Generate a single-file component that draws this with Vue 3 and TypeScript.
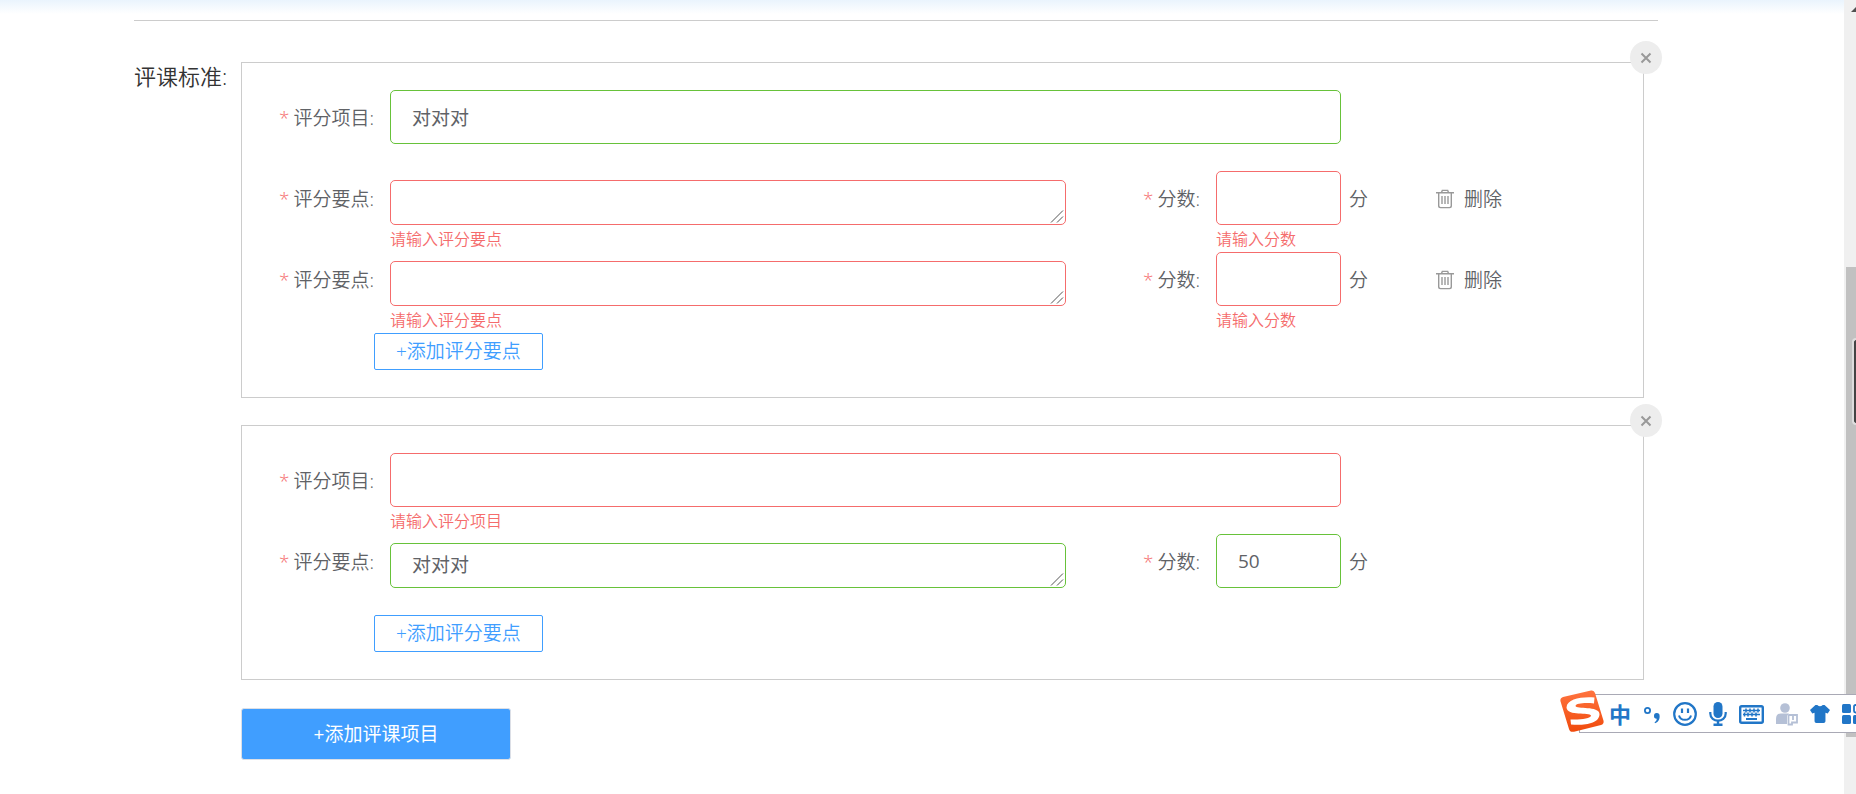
<script setup lang="ts">
import { reactive } from 'vue'

interface Point {
  text: string
  score: string
}

interface Project {
  name: string
  points: Point[]
}

const projects = reactive<Project[]>([
  { name: '对对对', points: [{ text: '', score: '' }, { text: '', score: '' }] },
  { name: '', points: [{ text: '对对对', score: '50' }] },
])

const addPoint = (project: Project) => project.points.push({ text: '', score: '' })
const removePoint = (project: Project, index: number) => project.points.splice(index, 1)
const addProject = () => projects.push({ name: '', points: [{ text: '', score: '' }] })
const removeProject = (index: number) => projects.splice(index, 1)
const state = (value: string) => (value ? 'valid' : 'invalid')
</script>

<template>
  <div class="page">
    <div class="top-shade"></div>
    <main class="content">
      <hr class="divider" />
      <section class="standard">
        <h2 class="title">评课标准:</h2>
        <div class="cards">
          <form v-for="(project, p) in projects" :key="p" class="card" @submit.prevent>
            <button type="button" class="close" aria-label="关闭" @click="removeProject(p)">
              <svg width="12" height="12" viewBox="0 0 12 12" aria-hidden="true">
                <path d="M1.5 1.5 10.5 10.5M10.5 1.5 1.5 10.5" fill="none" stroke="#999" stroke-width="2" />
              </svg>
            </button>

            <div class="row">
              <label class="label" :for="`name-${p}`"><span class="star">*</span>评分项目:</label>
              <div class="field wide">
                <input :id="`name-${p}`" v-model="project.name" type="text" class="control" :class="state(project.name)" />
                <p v-if="!project.name" class="error">请输入评分项目</p>
              </div>
            </div>

            <div v-for="(point, i) in project.points" :key="i" class="row">
              <label class="label" :for="`point-${p}-${i}`"><span class="star">*</span>评分要点:</label>
              <div class="field">
                <textarea :id="`point-${p}-${i}`" v-model="point.text" rows="1" class="control area" :class="state(point.text)"></textarea>
                <p v-if="!point.text" class="error">请输入评分要点</p>
              </div>
              <label class="label" :for="`score-${p}-${i}`"><span class="star">*</span>分数:</label>
              <div class="field">
                <input :id="`score-${p}-${i}`" v-model="point.score" type="text" class="control" :class="state(point.score)" />
                <p v-if="!point.score" class="error">请输入分数</p>
              </div>
              <div class="tail">
                <span class="unit">分</span>
                <button v-if="project.points.length > 1" type="button" class="remove" @click="removePoint(project, i)">
                  <svg width="18" height="20" viewBox="0 0 18 20" aria-hidden="true">
                    <g fill="none" stroke="#999" stroke-width="1.4">
                      <path d="M0 3.7H18M5.5 3.4 6.3 1.4H11.7L12.5 3.4M2.7 4V16.8Q2.7 18.6 4.5 18.6H13.5Q15.3 18.6 15.3 16.8V4" />
                      <path d="M6 7V15M9 7V15M12 7V15" />
                    </g>
                  </svg>
                  删除
                </button>
              </div>
            </div>

            <button type="button" class="add-point" @click="addPoint(project)">+添加评分要点</button>
          </form>
          <button type="button" class="add-project" @click="addProject">+添加评课项目</button>
        </div>
      </section>
    </main>

    <div class="scrollbar" aria-hidden="true">
      <svg class="arrow" width="5" height="5" viewBox="0 0 5 5"><path d="M0 5 5 0V5Z" fill="#505050" /></svg>
      <div class="thumb"></div>
      <div class="dock"></div>
    </div>

    <div class="ime">
      <svg class="logo" width="44" height="43" viewBox="0 0 44 43" aria-hidden="true">
        <defs>
          <linearGradient id="flame" x1="0" y1="0" x2="0" y2="1">
            <stop offset="0" stop-color="#ff7440" />
            <stop offset="1" stop-color="#f04a0c" />
          </linearGradient>
        </defs>
        <path d="M3 7 31 .6Q34 0 35 3L43.6 31Q44 34 41 35L14 41.7Q10 42.5 9 39L.4 11Q0 8 3 7Z" fill="url(#flame)" />
        <path d="M34.5 7.5 34 13.500C26 12.500 16 13 15.500 16C16 19.500 39 15.500 39.500 24C39.500 34 24 35.500 11 34.500L10.500 29.500C20 30 31 28.500 31 25.500C30 22 7 26.500 6.500 17.500C7 8.500 22 6.500 34.500 7.500Z" fill="#fff" />
      </svg>
      <span class="mode">中</span>
      <svg width="18" height="24" viewBox="0 0 18 24" aria-hidden="true">
        <circle cx="4.500" cy="8.500" r="2.600" fill="none" stroke="#2176c7" stroke-width="1.800" />
        <path d="M11 14a2.800 2.800 0 0 1 5.600-.2C17 17.500 15 20.500 12 21.300L11.600 20.200C13 19.500 13.800 18.300 13.700 16.800A2.700 2.700 0 0 1 11 14Z" fill="#2176c7" />
      </svg>
      <svg width="24" height="24" viewBox="0 0 24 24" fill="none" stroke="#2176c7" aria-hidden="true">
        <circle cx="12" cy="12" r="10.800" stroke-width="2.200" />
        <path d="M9 6.500V11M15 6.500V11" stroke-width="2.200" />
        <path d="M6 13.500C7.500 19.300 16.500 19.300 18 13.500" stroke-width="2" />
      </svg>
      <svg width="18" height="24" viewBox="0 0 18 24" aria-hidden="true">
        <rect x="4.500" y="0" width="9" height="16" rx="4.500" fill="#2176c7" />
        <path d="M1.300 10V11.500C1.300 21 16.700 21 16.700 11.500V10" fill="none" stroke="#2176c7" stroke-width="2.200" />
        <path d="M9 18V23M4.500 22.800H13.500" stroke="#2176c7" stroke-width="2.400" />
      </svg>
      <svg width="25" height="24" viewBox="0 0 25 24" aria-hidden="true">
        <rect x="1.200" y="4.200" width="22.600" height="16.600" rx="1.500" fill="none" stroke="#2176c7" stroke-width="2.400" />
        <path d="M4 8.500H21M4 12.500H21M7 6.500V10.500M11 6.500V10.500M15 6.500V10.500M19 6.500V10.500M5.500 10.500V14.500M9 10.500V14.500M13 10.500V14.500M17 10.500V14.500" stroke="#2176c7" stroke-width="1.500" />
        <path d="M7 17H18" stroke="#2176c7" stroke-width="2" />
      </svg>
      <svg width="22" height="24" viewBox="0 0 22 24" aria-hidden="true">
        <circle cx="9" cy="6" r="4.800" fill="#b5c0d6" />
        <path d="M0 22V17Q0 11.500 5 11.500H13L11 14V22Z" fill="#b5c0d6" />
        <path d="M13 13H21V20.500H16V22.500H12.500V14ZM17 13V18" fill="none" stroke="#b5c0d6" stroke-width="1.800" />
      </svg>
      <svg width="20" height="24" viewBox="0 0 22 24" aria-hidden="true">
        <path d="M6 2H8Q11 5 14 2H16L22 7.500 19.500 11.500 17 10.500V20Q17 22 15 22H7Q5 22 5 20V10.500L2.500 11.500 0 7.500Z" fill="#2176c7" />
      </svg>
      <svg width="22" height="24" viewBox="0 0 22 24" aria-hidden="true">
        <g fill="#2176c7">
          <rect x="0" y="2" width="9" height="9" rx="1.500" />
          <rect x="0" y="13" width="9" height="9" rx="1.500" />
          <rect x="11" y="13" width="9" height="9" rx="1.500" />
        </g>
        <rect x="12" y="3" width="7.500" height="7.500" rx="1.500" fill="none" stroke="#2176c7" stroke-width="1.800" />
      </svg>
    </div>
  </div>
</template>

<style>
body {
  margin: 0;
  background: #fff;
}
</style>

<style scoped>
.page {
  position: relative;
  min-height: 100vh;
  overflow: hidden;
  color: #606266;
  font: 19px/27px "Open Sans", "Noto Sans CJK SC", sans-serif;
}
.page * {
  box-sizing: border-box;
}
.top-shade {
  position: absolute;
  inset: 0 0 auto;
  height: 14px;
  background: linear-gradient(#eaf4fd, #fff);
}
.content {
  padding: 20px 198px 32px 134px;
}
.divider {
  position: relative;
  height: 1px;
  margin: 0 0 41px;
  border: 0;
  background: #ccc;
}
.standard {
  display: flex;
  align-items: flex-start;
}
.title {
  flex: none;
  width: 107px;
  margin: 0;
  color: #333;
  font-size: 22px;
  font-weight: 350;
  line-height: 28px;
  white-space: nowrap;
}
.cards {
  flex: 1;
  display: flex;
  flex-direction: column;
  align-items: flex-start;
  gap: 27px;
  min-width: 0;
  padding-right: 14px;
}
.card {
  position: relative;
  width: 100%;
  margin: 0;
  padding: 27px 0;
  border: 1px solid #ccc;
  font-weight: 350;
}
button,
input,
textarea {
  font: inherit;
}
button {
  cursor: pointer;
}
.close {
  position: absolute;
  top: -22px;
  right: -19px;
  display: flex;
  align-items: center;
  justify-content: center;
  width: 32px;
  height: 33px;
  padding: 0;
  border: 0;
  border-radius: 50%;
  background: #ededed;
}
.row {
  display: grid;
  grid-template-columns: 148px 1fr 150px 125px 302px;
  height: 81px;
}
.label {
  height: 54px;
  padding-right: 16px;
  line-height: 56px;
  text-align: right;
  white-space: nowrap;
}
.star {
  margin-right: 4px;
  color: #f56c6c;
}
.field {
  display: flex;
  flex-direction: column;
  min-width: 0;
}
.wide {
  grid-column: 2 / 5;
}
.control {
  width: 100%;
  height: 54px;
  padding: 0 21px;
  border: 1px solid #f56c6c;
  border-radius: 5px;
  outline: 0;
  background: #fff;
  color: #606266;
  font-weight: 400;
}
.area {
  height: 45px;
  margin-top: 9px;
  padding: 8px 21px;
  resize: vertical;
  overflow: hidden;
}
.area::-webkit-resizer {
  background: url("data:image/svg+xml,%3Csvg xmlns='http://www.w3.org/2000/svg' width='15' height='15'%3E%3Cpath d='M1 13.500 13 1.500M7 13.500 13 7.500' stroke='%23555' fill='none'/%3E%3C/svg%3E") no-repeat;
}
.valid {
  border-color: #67c23a;
}
.error {
  margin: 0;
  color: #f56c6c;
  font-size: 16px;
  line-height: 28px;
}
.tail {
  display: flex;
  align-items: center;
  height: 54px;
  padding: 2px 0 0 8px;
}
.unit {
  width: 87px;
}
.remove {
  display: flex;
  align-items: center;
  gap: 10px;
  padding: 0;
  border: 0;
  background: none;
  color: #606266;
}
.add-point {
  display: block;
  height: 37px;
  margin-left: 132px;
  padding: 0 21px;
  border: 1px solid #409eff;
  border-radius: 2px;
  background: #fff;
  color: #409eff;
  line-height: 35px;
}
.add-project {
  width: 270px;
  height: 52px;
  margin-top: 1px;
  padding: 0;
  border: 1px solid #dcdfe6;
  border-radius: 3px;
  background: #409eff;
  color: #fff;
}
.scrollbar {
  position: absolute;
  inset: 0 0 0 auto;
  width: 12px;
  background: #f0f0f0;
}
.arrow {
  position: absolute;
  top: 7px;
  right: 0;
}
.thumb {
  position: absolute;
  top: 267px;
  right: 0;
  width: 10px;
  height: 470px;
  background: #c1c1c1;
}
.dock {
  position: absolute;
  top: 338px;
  right: 0;
  width: 4px;
  height: 87px;
  border: 2px solid #ddd;
  border-right: 0;
  border-radius: 4px 0 0 4px;
  background: #444;
}
.ime {
  position: absolute;
  top: 694px;
  right: -9px;
  display: flex;
  align-items: center;
  gap: 12px;
  height: 39px;
  border: 1px solid #a9a9b5;
  background: #fff;
}
.ime svg {
  flex: none;
}
.ime .logo {
  margin: 0 -7px 4px -20px;
}
.mode {
  color: #2176c7;
  font-size: 22px;
  font-weight: 700;
  line-height: 36px;
}
</style>
